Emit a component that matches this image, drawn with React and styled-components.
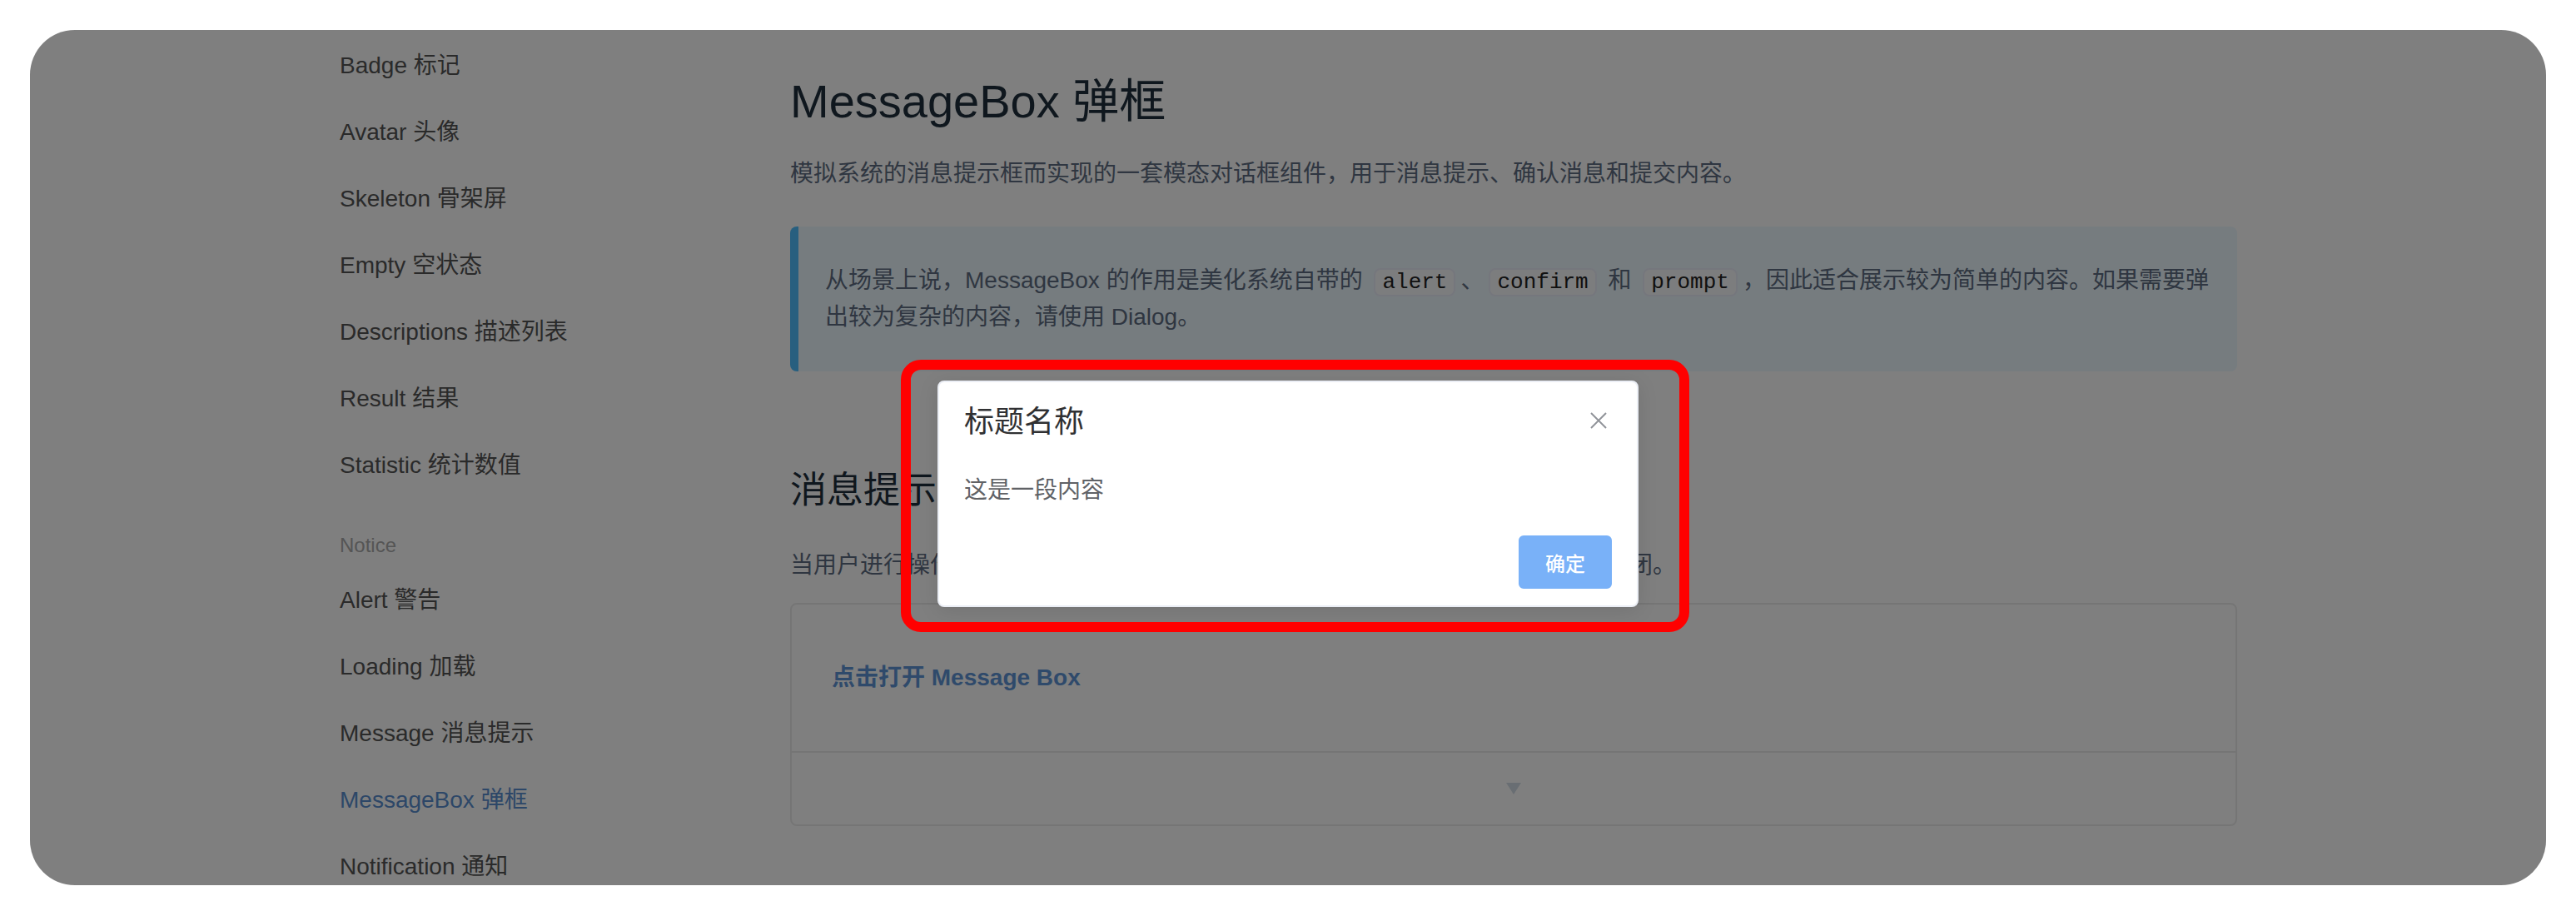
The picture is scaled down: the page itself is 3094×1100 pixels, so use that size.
import styled, { createGlobalStyle } from "styled-components";

const GlobalStyle = createGlobalStyle`
  html, body {
    margin: 0;
    background: #fff;
  }
  body {
    font-family: "Liberation Sans", "Noto Sans CJK SC", sans-serif;
  }
`;

const Page = styled.div`
  width: 3094px;
  box-sizing: border-box;
  padding: 36px;
`;

const Frame = styled.div`
  position: relative;
  display: flex;
  width: 3022px;
  height: 1027px;
  border-radius: 54px;
  overflow: hidden;
  background: #fff;
`;

const Sidebar = styled.nav`
  flex-shrink: 0;
  width: 913px;
  box-sizing: border-box;
  padding: 3px 0 0 372px;
`;

const NavItem = styled.div`
  height: 80px;
  line-height: 80px;
  font-size: 28px;
  white-space: nowrap;
  color: ${(p) => (p.$active ? "#5a8fd0" : "#555")};
`;

const NavGroup = styled.div`
  margin-top: 30px;
  line-height: 52px;
  font-size: 24px;
  color: #aaa;
`;

const Main = styled.main`
  width: 1738px;
  padding-top: 46px;
`;

const Title = styled.h2`
  margin: 0;
  font-size: 56px;
  line-height: 80px;
  font-weight: 400;
  color: #1f2f3d;
`;

const Lead = styled.p`
  margin: 23px 0 0;
  font-size: 28px;
  line-height: 48px;
  color: #5e6d82;
`;

const Tip = styled.div`
  margin-top: 39px;
  padding: 16px 32px;
  background: #ecf8ff;
  border-left: 10px solid #50bfff;
  border-radius: 8px;

  p {
    margin: 28px 0;
    font-size: 28px;
    line-height: 42px;
    color: #5e6d82;
    white-space: nowrap;
  }
`;

const Code = styled.code`
  margin: 0 6px;
  padding: 0 8px;
  font-family: "Liberation Mono", monospace;
  font-size: 26px;
  color: #222;
  background: #f9fafc;
  border: 2px solid #eaeefb;
  border-radius: 8px;
`;

const Section = styled.h3`
  margin: 110px 0 0;
  font-size: 44px;
  line-height: 66px;
  font-weight: 400;
  color: #1f2f3d;
`;

const Text = styled.p`
  margin: 36px 0 0;
  font-size: 28px;
  line-height: 42px;
  color: #5e6d82;
`;

const DemoBlock = styled.div`
  margin-top: 24px;
  border: 2px solid #ebebeb;
  border-radius: 8px;
`;

const DemoSource = styled.div`
  padding: 48px;
  border-bottom: 2px solid #ebebeb;
`;

const TextButton = styled.span`
  display: inline-block;
  height: 80px;
  line-height: 80px;
  font-size: 28px;
  font-weight: 700;
  color: #5f95d6;
`;

const DemoControl = styled.div`
  display: flex;
  align-items: center;
  justify-content: center;
  height: 86px;
`;

const Overlay = styled.div`
  position: absolute;
  inset: 0;
  display: flex;
  justify-content: center;
  align-items: flex-start;
  background: rgba(0, 0, 0, 0.5);
`;

const Box = styled.div`
  width: 842px;
  box-sizing: border-box;
  margin-top: 421px;
  padding-bottom: 20px;
  background: #fff;
  border: 2px solid #ebeef5;
  border-radius: 8px;
  box-shadow: 0 4px 24px rgba(0, 0, 0, 0.1);
`;

const BoxHeader = styled.div`
  position: relative;
  padding: 30px 30px 20px;
`;

const BoxTitle = styled.div`
  font-size: 36px;
  line-height: 36px;
  color: #303133;
`;

const CloseBtn = styled.button`
  position: absolute;
  top: 30px;
  right: 30px;
  display: flex;
  align-items: center;
  justify-content: center;
  width: 32px;
  height: 32px;
  padding: 0;
  border: none;
  background: transparent;
`;

const BoxContent = styled.div`
  padding: 20px 30px;
  font-size: 28px;
  line-height: 48px;
  color: #606266;
`;

const BoxButtons = styled.div`
  padding: 10px 30px 0;
  text-align: right;
`;

const PrimaryButton = styled.button`
  height: 64px;
  padding: 0 30px;
  font-family: inherit;
  font-size: 24px;
  font-weight: 500;
  color: #fff;
  background: #79b1f8;
  border: 2px solid #79b1f8;
  border-radius: 6px;
`;

const Marker = styled.div`
  position: absolute;
  left: 1046px;
  top: 396px;
  width: 947px;
  height: 327px;
  box-sizing: border-box;
  border: 12px solid #ff0000;
  border-radius: 24px;
`;

const navTop = ["Badge 标记", "Avatar 头像", "Skeleton 骨架屏", "Empty 空状态", "Descriptions 描述列表", "Result 结果", "Statistic 统计数值"];
const navNotice = ["Alert 警告", "Loading 加载", "Message 消息提示", "MessageBox 弹框", "Notification 通知"];

export default function App() {
  return (
    <Page>
      <GlobalStyle />
      <Frame>
        <Sidebar>
          {navTop.map((t) => (
            <NavItem key={t}>{t}</NavItem>
          ))}
          <NavGroup>Notice</NavGroup>
          {navNotice.map((t) => (
            <NavItem key={t} $active={t === "MessageBox 弹框"}>
              {t}
            </NavItem>
          ))}
        </Sidebar>
        <Main>
          <Title>MessageBox 弹框</Title>
          <Lead>模拟系统的消息提示框而实现的一套模态对话框组件，用于消息提示、确认消息和提交内容。</Lead>
          <Tip>
            <p>
              从场景上说，MessageBox 的作用是美化系统自带的 <Code>alert</Code>、<Code>confirm</Code> 和 <Code>prompt</Code>，因此适合展示较为简单的内容。如果需要弹
              <br />
              出较为复杂的内容，请使用 Dialog。
            </p>
          </Tip>
          <Section>消息提示</Section>
          <Text>当用户进行操作时会被触发，该对话框中断用户操作，直到用户确认知晓后才可关闭。</Text>
          <DemoBlock>
            <DemoSource>
              <TextButton>点击打开 Message Box</TextButton>
            </DemoSource>
            <DemoControl>
              <svg width="18" height="14" viewBox="0 0 18 14">
                <polygon points="0,0 18,0 9,14" fill="#d3dce6" />
              </svg>
            </DemoControl>
          </DemoBlock>
        </Main>
        <Overlay>
          <Box>
            <BoxHeader>
              <BoxTitle>标题名称</BoxTitle>
              <CloseBtn aria-label="Close">
                <svg width="20" height="20" viewBox="0 0 20 20">
                  <path d="M1 1L19 19M19 1L1 19" stroke="#909399" strokeWidth="2" fill="none" />
                </svg>
              </CloseBtn>
            </BoxHeader>
            <BoxContent>这是一段内容</BoxContent>
            <BoxButtons>
              <PrimaryButton>确定</PrimaryButton>
            </BoxButtons>
          </Box>
        </Overlay>
        <Marker />
      </Frame>
    </Page>
  );
}
